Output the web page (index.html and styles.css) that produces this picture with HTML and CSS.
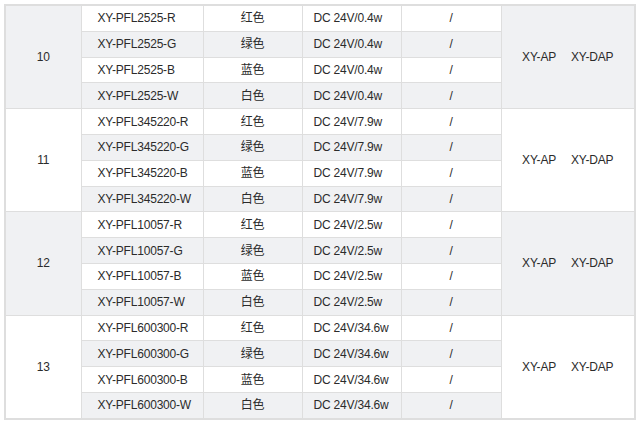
FILE: index.html
```html
<!DOCTYPE html>
<html lang="zh">
<head>
<meta charset="utf-8">
<link rel="stylesheet" href="styles.css">
</head>
<body>
<table class="spec">
  <colgroup>
    <col class="c-no"><col class="c-model"><col class="c-color"><col class="c-power"><col class="c-slash"><col class="c-acc">
  </colgroup>
  <tbody class="grp shade">
    <tr><td class="no" rowspan="4">10</td><td class="model">XY-PFL2525-R</td><td class="ctr">红色</td><td class="pw">DC 24V/0.4w</td><td class="ctr">/</td><td class="acc" rowspan="4"><span>XY-AP</span><span>XY-DAP</span></td></tr>
    <tr class="alt"><td class="model">XY-PFL2525-G</td><td class="ctr">绿色</td><td class="pw">DC 24V/0.4w</td><td class="ctr">/</td></tr>
    <tr><td class="model">XY-PFL2525-B</td><td class="ctr">蓝色</td><td class="pw">DC 24V/0.4w</td><td class="ctr">/</td></tr>
    <tr class="alt"><td class="model">XY-PFL2525-W</td><td class="ctr">白色</td><td class="pw">DC 24V/0.4w</td><td class="ctr">/</td></tr>
  </tbody>
  <tbody class="grp">
    <tr><td class="no" rowspan="4">11</td><td class="model">XY-PFL345220-R</td><td class="ctr">红色</td><td class="pw">DC 24V/7.9w</td><td class="ctr">/</td><td class="acc" rowspan="4"><span>XY-AP</span><span>XY-DAP</span></td></tr>
    <tr class="alt"><td class="model">XY-PFL345220-G</td><td class="ctr">绿色</td><td class="pw">DC 24V/7.9w</td><td class="ctr">/</td></tr>
    <tr><td class="model">XY-PFL345220-B</td><td class="ctr">蓝色</td><td class="pw">DC 24V/7.9w</td><td class="ctr">/</td></tr>
    <tr class="alt"><td class="model">XY-PFL345220-W</td><td class="ctr">白色</td><td class="pw">DC 24V/7.9w</td><td class="ctr">/</td></tr>
  </tbody>
  <tbody class="grp shade">
    <tr><td class="no" rowspan="4">12</td><td class="model">XY-PFL10057-R</td><td class="ctr">红色</td><td class="pw">DC 24V/2.5w</td><td class="ctr">/</td><td class="acc" rowspan="4"><span>XY-AP</span><span>XY-DAP</span></td></tr>
    <tr class="alt"><td class="model">XY-PFL10057-G</td><td class="ctr">绿色</td><td class="pw">DC 24V/2.5w</td><td class="ctr">/</td></tr>
    <tr><td class="model">XY-PFL10057-B</td><td class="ctr">蓝色</td><td class="pw">DC 24V/2.5w</td><td class="ctr">/</td></tr>
    <tr class="alt"><td class="model">XY-PFL10057-W</td><td class="ctr">白色</td><td class="pw">DC 24V/2.5w</td><td class="ctr">/</td></tr>
  </tbody>
  <tbody class="grp">
    <tr><td class="no" rowspan="4">13</td><td class="model">XY-PFL600300-R</td><td class="ctr">红色</td><td class="pw">DC 24V/34.6w</td><td class="ctr">/</td><td class="acc" rowspan="4"><span>XY-AP</span><span>XY-DAP</span></td></tr>
    <tr class="alt"><td class="model">XY-PFL600300-G</td><td class="ctr">绿色</td><td class="pw">DC 24V/34.6w</td><td class="ctr">/</td></tr>
    <tr><td class="model">XY-PFL600300-B</td><td class="ctr">蓝色</td><td class="pw">DC 24V/34.6w</td><td class="ctr">/</td></tr>
    <tr class="alt"><td class="model">XY-PFL600300-W</td><td class="ctr">白色</td><td class="pw">DC 24V/34.6w</td><td class="ctr">/</td></tr>
  </tbody>
</table>
</body>
</html>
```

FILE: styles.css
```css
html, body {
  margin: 0;
  background: #ffffff;
}
body {
  padding: 4px 4px 0 4px;
  font-family: "Liberation Sans", Arial, "Noto Sans CJK SC", sans-serif;
  font-size: 12px;
  color: #2b2b2b;
}
.spec {
  border-collapse: collapse;
  table-layout: fixed;
  width: 630px;
  border: 2px solid #dedede;
}
.c-no { width: 76px; }
.c-model { width: 122px; }
.c-color { width: 99px; }
.c-power { width: 99px; }
.c-slash { width: 100px; }
.c-acc { width: 134px; }

.spec td {
  border: 1px solid #dedede;
  height: 24.8px;
  padding: 0;
  line-height: 14px;
  background: #ffffff;
  white-space: nowrap;
  letter-spacing: -0.2px;
}
.spec tr.alt td {
  background: #f0f1f3;
}
.spec .shade td.no,
.spec .shade td.acc {
  background: #f0f1f3;
}
.spec td.no {
  text-align: center;
}
.spec td.model {
  padding-left: 16px;
}
.spec td.pw {
  padding-left: 11px;
}
.spec td.ctr {
  text-align: center;
}
.spec td.acc {
  text-align: center;
}
.acc span + span {
  margin-left: 15px;
}
```
